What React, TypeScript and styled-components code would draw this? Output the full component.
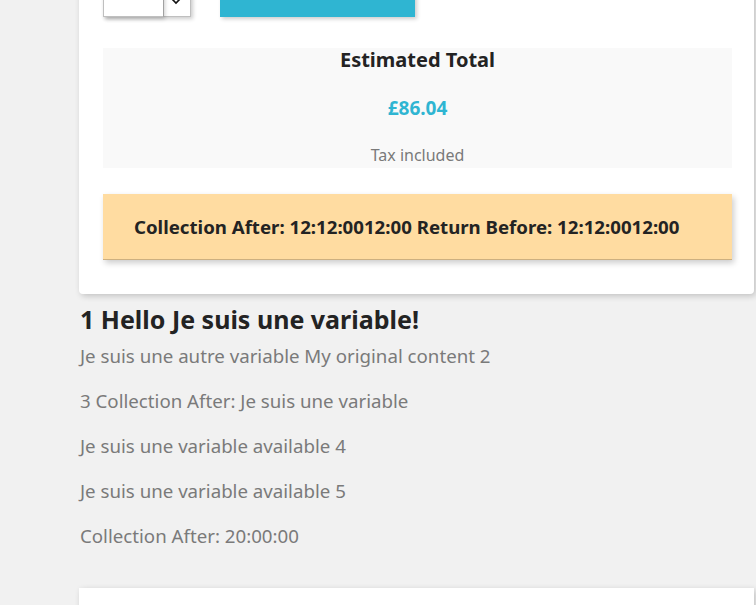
import React from "react";
import styled, { createGlobalStyle } from "styled-components";

const GlobalStyle = createGlobalStyle`
  html, body { margin: 0; padding: 0; }
  body {
    background: #f1f1f1;
    font-family: "Noto Sans", "Open Sans", sans-serif;
    color: #232323;
    overflow: hidden;
  }
`;

const Page = styled.div`
  padding: 0 2px 0 79px;
`;

const Card = styled.section<{ $top?: boolean }>`
  background: #fff;
  box-shadow: 2px 2px 6px 0 rgba(0, 0, 0, 0.2);
  border-radius: 0 0 4px 4px;
  padding: 0 22px 34px 24px;
  margin-top: ${(p) => (p.$top ? "-15px" : "0")};
`;

const ActionsRow = styled.div`
  display: flex;
  align-items: flex-end;
  gap: 29px;
  height: 32px;
`;

const QtySelect = styled.div`
  display: flex;
  height: 32px;
  width: 88px;
  box-shadow: 2px 2px 4px rgba(0, 0, 0, 0.2);
`;

const QtyInput = styled.div`
  flex: 1;
  background: #fff;
  border: 1px solid rgba(0, 0, 0, 0.25);
  border-right: none;
  box-shadow: 2px 2px 4px rgba(0, 0, 0, 0.2);
  position: relative;
  z-index: 1;
`;

const QtyArrow = styled.div`
  width: 28px;
  background: #fff;
  border: 1px solid rgba(0, 0, 0, 0.25);
  display: flex;
  align-items: flex-end;
  justify-content: center;
  padding: 0 3px 11px 0;
  box-sizing: border-box;
`;

const AddButton = styled.button`
  width: 195px;
  height: 32px;
  border: none;
  background: #2fb5d2;
  box-shadow: 2px 2px 4px rgba(0, 0, 0, 0.2);
`;

const TotalBox = styled.div`
  margin-top: 31px;
  background: #f9f9f9;
  text-align: center;
  padding-bottom: 3px;
`;

const TotalTitle = styled.h3`
  margin: 0;
  font-size: 20px;
  line-height: 24px;
  font-weight: 700;
  color: #232323;
`;

const TotalPrice = styled.p`
  margin: 24px 0 0;
  font-size: 19px;
  line-height: 24px;
  font-weight: 700;
  color: #2fb5d2;
`;

const TaxNote = styled.p`
  margin: 25px 0 0;
  font-size: 16px;
  line-height: 20px;
  color: #7a7a7a;
`;

const Notice = styled.div`
  margin-top: 26px;
  height: 66px;
  box-sizing: border-box;
  background: #ffdca1;
  border-bottom: 1px solid #cdb080;
  box-shadow: 2px 3px 6px rgba(0, 0, 0, 0.2);
  display: flex;
  align-items: center;
  padding: 0 30px 0 31px;
  font-size: 18.65px;
  font-weight: 700;
  color: #232323;
`;

const Content = styled.div`
  padding: 0 0 0 1px;
`;

const Heading = styled.h1`
  margin: 8px 0 7px;
  font-size: 25px;
  line-height: 34px;
  font-weight: 700;
  color: #232323;
`;

const Para = styled.p`
  margin: 0 0 19px;
  font-size: 18.7px;
  line-height: 26px;
  color: #7a7a7a;
`;

const LastGap = styled.div`
  height: 20px;
`;

const Chevron = () => (
  <svg width="10" height="7" viewBox="0 0 10 7">
    <path d="M1 1l4 4 4-4" fill="none" stroke="#111" strokeWidth="1.6" />
  </svg>
);

export default function App() {
  return (
    <>
      <GlobalStyle />
      <Page>
        <Card $top>
          <ActionsRow>
            <QtySelect>
              <QtyInput />
              <QtyArrow>
                <Chevron />
              </QtyArrow>
            </QtySelect>
            <AddButton aria-label="Add to cart" />
          </ActionsRow>
          <TotalBox>
            <TotalTitle>Estimated Total</TotalTitle>
            <TotalPrice>£86.04</TotalPrice>
            <TaxNote>Tax included</TaxNote>
          </TotalBox>
          <Notice>Collection After: 12:12:0012:00 Return Before: 12:12:0012:00</Notice>
        </Card>
        <Content>
          <Heading>1 Hello Je suis une variable!</Heading>
          <Para>Je suis une autre variable My original content 2</Para>
          <Para>3 Collection After: Je suis une variable</Para>
          <Para>Je suis une variable available 4</Para>
          <Para>Je suis une variable available 5</Para>
          <Para>Collection After: 20:00:00</Para>
        </Content>
        <LastGap />
        <Card>
          <div style={{ height: 60 }} />
        </Card>
      </Page>
    </>
  );
}
